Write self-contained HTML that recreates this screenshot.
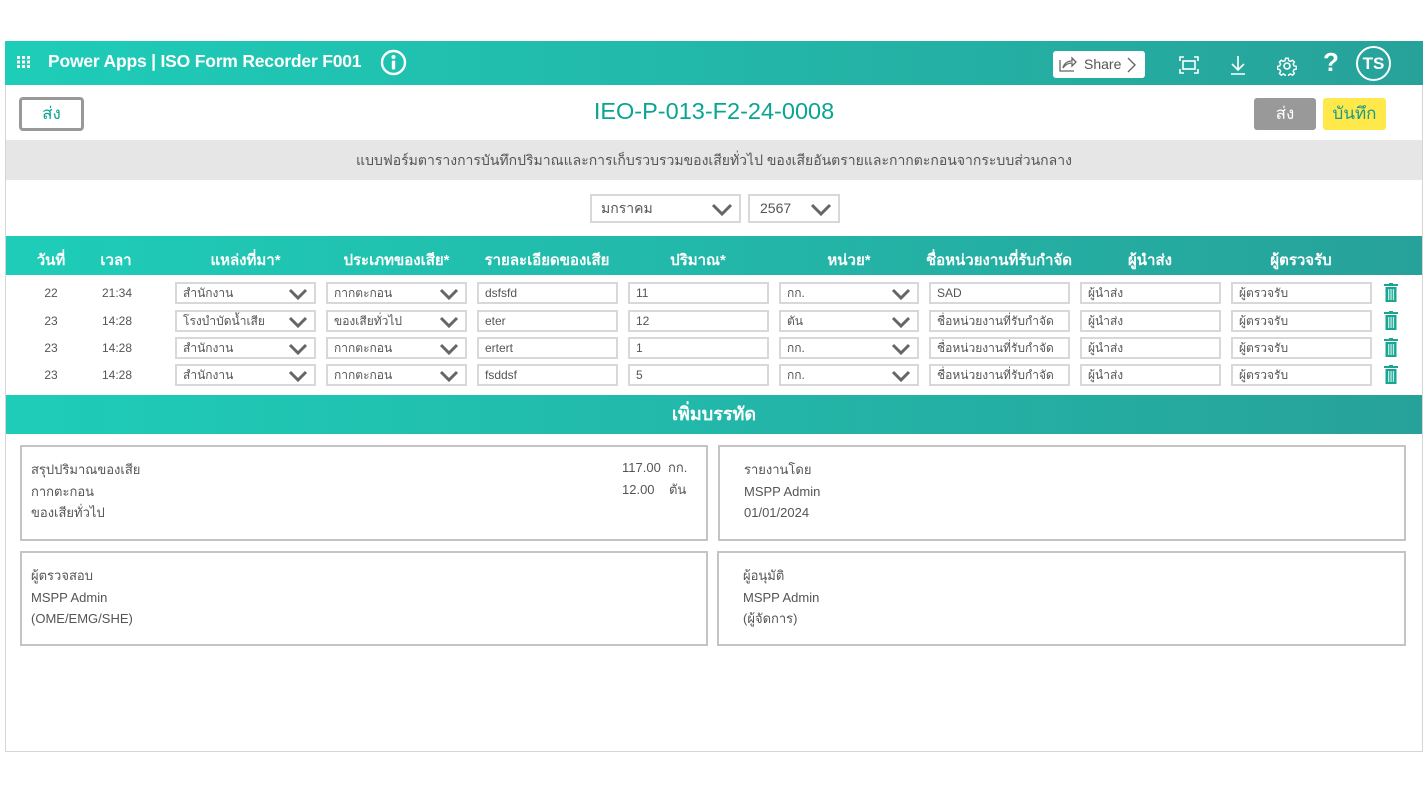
<!DOCTYPE html>
<html><head><meta charset="utf-8"><style>
*{box-sizing:border-box;margin:0;padding:0}
body{width:1428px;height:794px;background:#fff;position:relative;overflow:hidden;font-family:"Liberation Sans","DejaVu Sans","Noto Sans CJK SC",sans-serif;color:#444}
.a{position:absolute}
.teal{background:linear-gradient(90deg,#1ecdb8,#27a29a)}
.in{position:absolute;height:22px;border:2px solid #d8d8d8;background:#fff;font-size:12px;color:#555;padding-left:6px;line-height:18px;white-space:nowrap;overflow:hidden}
.chev{position:absolute;right:6px;top:4px}
.c{position:absolute;font-size:12px;color:#555;text-align:center}
.th{position:absolute;top:248px;color:#fff;font-size:15px;font-weight:bold;text-align:center}
.box{position:absolute;border:2px solid #c4c4c4;background:#fff;font-size:13px;color:#555;line-height:21.5px;padding:12px 0 0 9px}
</style></head><body>
<div class="a" style="left:5px;top:41px;width:1418px;height:711px;border:1px solid #d6d6d6"></div>
<div class="a teal" style="left:5px;top:41px;width:1418px;height:44px"></div>
<svg class="a" style="left:17px;top:55px" width="14" height="14" viewBox="0 0 14 14" fill="#fff"><rect x="0" y="1" width="3" height="3"/><rect x="5" y="1" width="3" height="3"/><rect x="10" y="1" width="3" height="3"/><rect x="0" y="5.5" width="3" height="3"/><rect x="5" y="5.5" width="3" height="3"/><rect x="10" y="5.5" width="3" height="3"/><rect x="0" y="10" width="3" height="3"/><rect x="5" y="10" width="3" height="3"/><rect x="10" y="10" width="3" height="3"/></svg>
<div class="a" style="left:48px;top:51px;color:#fff;font-size:17.5px;font-weight:bold;letter-spacing:-0.2px">Power Apps | ISO Form Recorder F001</div>
<svg class="a" style="left:380px;top:49px" width="27" height="27" viewBox="0 0 27 27"><circle cx="13.5" cy="13.5" r="11.5" fill="none" stroke="#fff" stroke-width="2.4"/><circle cx="13.5" cy="8" r="2" fill="#fff"/><rect x="11.8" y="11.5" width="3.4" height="9" rx="1" fill="#fff"/></svg>
<div class="a" style="left:1053px;top:51px;width:92px;height:27px;background:#fff;border-radius:3px;font-size:14px;color:#555;line-height:27px;padding-left:31px">Share</div>
<svg class="a" style="left:1059px;top:56px" width="18" height="16" viewBox="0 0 18 16" fill="none" stroke="#666" stroke-width="1.3"><path d="M1 4v11h14"/><path d="M4 12c1-5 5-7 9-7V2l4 4-4 4V7c-4 0-7 2-9 5z"/></svg>
<svg class="a" style="left:1127px;top:57px" width="9" height="16" viewBox="0 0 9 16" fill="none" stroke="#666" stroke-width="1.4"><path d="M1 1l7 7-7 7"/></svg>
<svg class="a" style="left:1179px;top:56px" width="20" height="18" viewBox="0 0 20 18" fill="none" stroke="#fff" stroke-width="1.6"><path d="M1 5V1h4M15 1h4v4M19 13v4h-4M5 17H1v-4"/><rect x="4" y="5" width="12" height="8"/></svg>
<svg class="a" style="left:1230px;top:55px" width="16" height="20" viewBox="0 0 16 20" fill="none" stroke="#fff" stroke-width="1.6"><path d="M8 1v14M2 9l6 6 6-6M1 19h14"/></svg>
<svg class="a" style="left:1277px;top:56px" width="20" height="20" viewBox="0 0 20 20" fill="none" stroke="#fff" stroke-width="1.6"><circle cx="10" cy="10" r="3"/><path d="M8.5 1.5h3l.5 2.5 2 1 2.3-1.3 2 2-1.3 2.3 1 2 2.5.5v3l-2.5.5-1 2 1.3 2.3-2 2-2.3-1.3-2 1-.5 2.5h-3l-.5-2.5-2-1-2.3 1.3-2-2 1.3-2.3-1-2-2.5-.5v-3l2.5-.5 1-2-1.3-2.3 2-2 2.3 1.3 2-1z" transform="scale(.9) translate(1 1)"/></svg>
<div class="a" style="left:1323px;top:47px;color:#fff;font-size:26px;font-weight:bold">?</div>
<div class="a" style="left:1356px;top:46px;width:35px;height:35px;border:2px solid #fff;border-radius:50%;color:#fff;font-size:17px;font-weight:bold;text-align:center;line-height:31px">TS</div>
<div class="a" style="left:19px;top:97px;width:65px;height:34px;border:3px solid #999;border-radius:4px;color:#0aa592;font-size:17px;text-align:center;line-height:27px">ส่ง</div>
<div class="a" style="left:0;top:98px;width:1428px;text-align:center;color:#0aa592;font-size:23.5px">IEO-P-013-F2-24-0008</div>
<div class="a" style="left:1254px;top:98px;width:62px;height:32px;background:#999;border-radius:3px;color:#fff;font-size:17px;text-align:center;line-height:31px">ส่ง</div>
<div class="a" style="left:1323px;top:98px;width:63px;height:32px;background:#ffe84a;border-radius:3px;color:#1a9a8a;font-size:17px;text-align:center;line-height:31px">บันทึก</div>
<div class="a" style="left:6px;top:140px;width:1416px;height:40px;background:#e6e6e6;text-align:center;font-size:14px;color:#555;line-height:40px">แบบฟอร์มตารางการบันทึกปริมาณและการเก็บรวบรวมของเสียทั่วไป ของเสียอันตรายและกากตะกอนจากระบบส่วนกลาง</div>
<div class="in" style="left:590px;top:194px;width:151px;height:29px;font-size:14px;line-height:25px;padding-left:9px">มกราคม<svg class="chev" style="top:7px" width="22" height="13" viewBox="0 0 22 13"><path d="M2 2l9 9 9-9" fill="none" stroke="#666" stroke-width="3"/></svg></div>
<div class="in" style="left:748px;top:194px;width:92px;height:29px;font-size:14px;line-height:25px;padding-left:10px">2567<svg class="chev" style="top:7px" width="22" height="13" viewBox="0 0 22 13"><path d="M2 2l9 9 9-9" fill="none" stroke="#666" stroke-width="3"/></svg></div>
<div class="a teal" style="left:6px;top:236px;width:1416px;height:39px"></div>
<div class="th" style="left:30px;width:42px">วันที่</div>
<div class="th" style="left:95px;width:42px">เวลา</div>
<div class="th" style="left:175px;width:141px">แหล่งที่มา*</div>
<div class="th" style="left:326px;width:141px">ประเภทของเสีย*</div>
<div class="th" style="left:472px;width:150px">รายละเอียดของเสีย</div>
<div class="th" style="left:628px;width:140px">ปริมาณ*</div>
<div class="th" style="left:779px;width:140px">หน่วย*</div>
<div class="th" style="left:920px;width:158px">ชื่อหน่วยงานที่รับกำจัด</div>
<div class="th" style="left:1080px;width:140px">ผู้นำส่ง</div>
<div class="th" style="left:1231px;width:140px">ผู้ตรวจรับ</div>
<div id="rows"></div>
<div class="a teal" style="left:6px;top:395px;width:1416px;height:39px;color:#fff;font-size:18px;font-weight:bold;text-align:center;line-height:38px">เพิ่มบรรทัด</div>
<div class="box" style="left:20px;top:445px;width:688px;height:96px">สรุปปริมาณของเสีย<br>กากตะกอน<br>ของเสียทั่วไป</div>
<div class="a" style="left:622px;top:457px;font-size:13px;color:#555;line-height:21.5px">117.00&nbsp; กก.<br>12.00 &nbsp;&nbsp; ตัน</div>
<div class="box" style="left:718px;top:445px;width:688px;height:96px;padding-left:24px">รายงานโดย<br>MSPP Admin<br>01/01/2024</div>
<div class="box" style="left:20px;top:551px;width:688px;height:95px">ผู้ตรวจสอบ<br>MSPP Admin<br>(OME/EMG/SHE)</div>
<div class="box" style="left:717px;top:551px;width:689px;height:95px;padding-left:24px">ผู้อนุมัติ<br>MSPP Admin<br>(ผู้จัดการ)</div>
<script>
var R=[["22","21:34","สำนักงาน","กากตะกอน","dsfsfd","11","กก.","SAD"],["23","14:28","โรงบำบัดน้ำเสีย","ของเสียทั่วไป","eter","12","ตัน","ชื่อหน่วยงานที่รับกำจัด"],["23","14:28","สำนักงาน","กากตะกอน","ertert","1","กก.","ชื่อหน่วยงานที่รับกำจัด"],["23","14:28","สำนักงาน","กากตะกอน","fsddsf","5","กก.","ชื่อหน่วยงานที่รับกำจัด"]];
var Y=[282,310,337,364],h="";
var ch='<svg class="chev" width="20" height="12" viewBox="0 0 20 12"><path d="M2 2l8 8 8-8" fill="none" stroke="#666" stroke-width="3"/></svg>';
R.forEach(function(r,i){var y=Y[i];
h+='<div class="c" style="left:36px;top:'+(y+4)+'px;width:30px">'+r[0]+'</div>';
h+='<div class="c" style="left:96px;top:'+(y+4)+'px;width:42px">'+r[1]+'</div>';
h+='<div class="in" style="left:175px;top:'+y+'px;width:141px">'+r[2]+ch+'</div>';
h+='<div class="in" style="left:326px;top:'+y+'px;width:141px">'+r[3]+ch+'</div>';
h+='<div class="in" style="left:477px;top:'+y+'px;width:141px">'+r[4]+'</div>';
h+='<div class="in" style="left:628px;top:'+y+'px;width:141px">'+r[5]+'</div>';
h+='<div class="in" style="left:779px;top:'+y+'px;width:140px">'+r[6]+ch+'</div>';
h+='<div class="in" style="left:929px;top:'+y+'px;width:141px">'+r[7]+'</div>';
h+='<div class="in" style="left:1080px;top:'+y+'px;width:141px">ผู้นำส่ง</div>';
h+='<div class="in" style="left:1231px;top:'+y+'px;width:141px">ผู้ตรวจรับ</div>';
h+='<svg class="a" style="left:1384px;top:'+(y+1)+'px" width="14" height="19" viewBox="0 0 14 19"><rect x="0" y="1" width="14" height="2" fill="#1aa592"/><rect x="5" y="0" width="4" height="2" fill="#1aa592"/><rect x="1.5" y="4" width="11" height="15" fill="#1aa592"/><rect x="4" y="6" width="1.3" height="11" fill="#bdeee6"/><rect x="6.4" y="6" width="1.3" height="11" fill="#bdeee6"/><rect x="8.8" y="6" width="1.3" height="11" fill="#bdeee6"/></svg>';
});
document.getElementById("rows").innerHTML=h;
</script>
</body></html>
